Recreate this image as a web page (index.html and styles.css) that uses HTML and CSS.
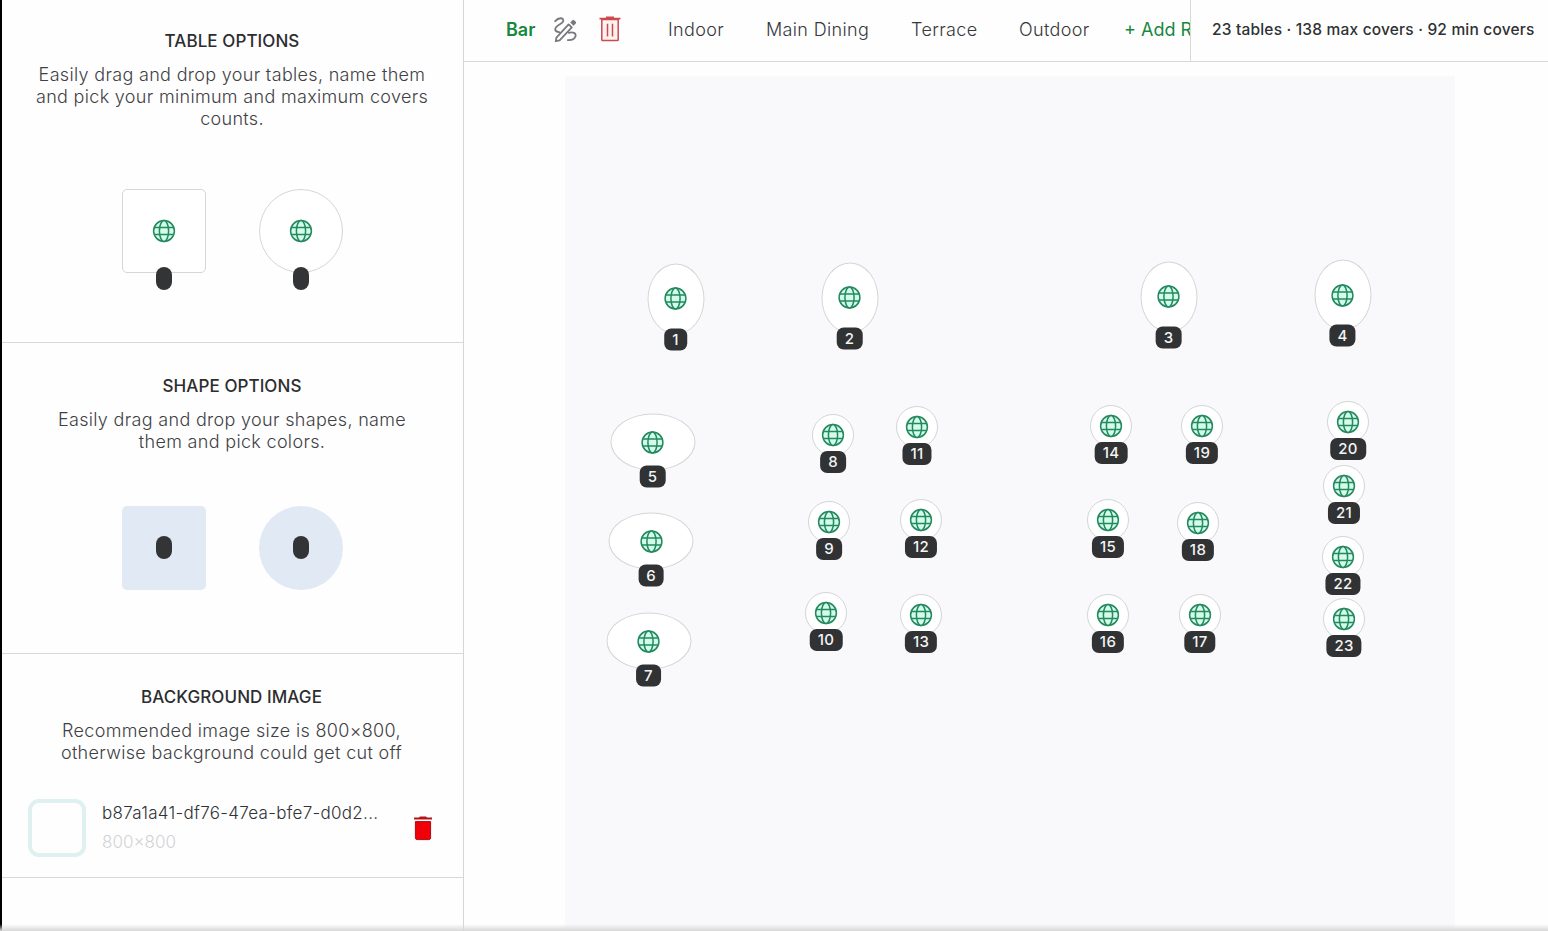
FILE: index.html
```
<!DOCTYPE html>
<html lang="en">
<head>
<meta charset="utf-8">
<title>Floor plan</title>
<link rel="stylesheet" href="styles.css">
</head>
<body>
<svg class="defs" width="0" height="0" aria-hidden="true">
  <symbol id="globe" viewBox="0 0 24 24">
    <circle cx="12" cy="12" r="10.4"/>
    <ellipse cx="12" cy="12" rx="4.6" ry="10.4"/>
    <path d="M2.3 8.5h19.4M2.3 15.5h19.4"/>
  </symbol>
</svg>
<div class="app">
  <aside class="sidebar">
    <section class="panel panel-tables">
      <h2 class="panel-title">TABLE OPTIONS</h2>
      <p class="panel-text">Easily drag and drop your tables, name them<br>and pick your minimum and maximum covers<br>counts.</p>
      <div class="palette">
        <div class="piece square"><svg class="globe"><use href="#globe"/></svg><span class="handle low"></span></div>
        <div class="piece round"><svg class="globe"><use href="#globe"/></svg><span class="handle low"></span></div>
      </div>
    </section>
    <section class="panel panel-shapes">
      <h2 class="panel-title">SHAPE OPTIONS</h2>
      <p class="panel-text">Easily drag and drop your shapes, name<br>them and pick colors.</p>
      <div class="palette">
        <div class="piece solid square"><span class="handle"></span></div>
        <div class="piece solid round"><span class="handle"></span></div>
      </div>
    </section>
    <section class="panel panel-image">
      <h2 class="panel-title">BACKGROUND IMAGE</h2>
      <p class="panel-text">Recommended image size is 800×800,<br>otherwise background could get cut off</p>
      <div class="file">
        <div class="thumb"></div>
        <div class="file-info">
          <div class="file-name">b87a1a41-df76-47ea-bfe7-d0d2...</div>
          <div class="file-size">800×800</div>
        </div>
        <svg class="file-trash" viewBox="0 0 20 26"><path d="M1 2.6h5L7 1.4h6l1 1.2h5v1.8H1z" fill="#b3121b"/><path d="M2.4 6.6h15.2v16.2q0 1.8-1.8 1.8H4.2q-1.8 0-1.8-1.8z" fill="#f00008" stroke="#a80d14"/></svg>
      </div>
    </section>
  </aside>
  <main class="main">
    <header class="topbar">
      <nav class="rooms">
        <span class="room active">Bar</span>
        <svg class="edit" viewBox="0 0 24 26"><path d="M1.2 4.2C4.8 0 10 .5 9.2 4.2 8.5 7.2 1 8.500 1.200 12.400c.1 2 1.800 2.600 4 2.800M14.800 15.800c4-1.400 7.800.4 6.600 3.800-.8 2.600-3.600 3.800-7.600 3.600M2.400 20.600 14.600 7.400l3.200 3L5.600 23.400l-3.800.8z"/><path class="tip" d="m16.200 5.400 2.200-2.200q.8-.8 1.700 0l1.700 1.600q.8.800 0 1.700l-2.300 2.200z"/></svg>
        <svg class="delete" viewBox="0 0 22 26"><path class="lid" d="M.5 2.700h21M7 1.400h8"/><path d="M2.800 3.500h16.400v20.200q0 .8-.8.800H3.600q-.8 0-.8-.8zM8.500 7.800v12.800M13.500 7.800v12.800"/></svg>
        <span class="room indoor">Indoor</span>
        <span class="room dining">Main Dining</span>
        <span class="room terrace">Terrace</span>
        <span class="room outdoor">Outdoor</span>
        <span class="room add">+ Add Room</span>
      </nav>
      <div class="summary">23 tables · 138 max covers · 92 min covers</div>
    </header>
    <div class="stage"><div class="floor" id="floor"></div></div>
  </main>
  <div class="bottom-shade"></div>
</div>
<script src="floor.js"></script>
</body>
</html>
```
FILE: styles.css
```
* { box-sizing: border-box; }
body { margin: 0; background: #fefefe; font-family: Inter, "Liberation Sans", sans-serif; color: #303235; }
.defs { position: absolute; }
.app { position: relative; display: flex; width: 1548px; height: 931px; overflow: hidden; }
.sidebar { flex: none; width: 464px; border-left: 2px solid #000; border-right: 1px solid #d6d6da; }
.panel { border-bottom: 1px solid #d8d8da; padding: 31px 28px 0 26px; text-align: center; }
.panel-tables, .panel-shapes { padding-left: 27px; }
.panel-tables { height: 343px; padding-top: 29px; }
.panel-shapes { height: 311px; }
.panel-image { height: 224px; }
.panel-title { margin: 0 0 11px; font-size: 17px; line-height: 24px; font-weight: 500; letter-spacing: .08px; color: #2c2d30; }
.panel-text { margin: 0; font-size: 18px; line-height: 21.900px; font-weight: 300; letter-spacing: .32px; white-space: nowrap; color: #3f4145; }
.palette { display: flex; justify-content: center; gap: 53px; margin-top: 59px; }
.panel-shapes .palette { margin-top: 53px; }
.piece { position: relative; width: 84px; height: 84px; display: flex; align-items: center; justify-content: center; border: 1px solid #d5d6da; background: #fff; }
.square { border-radius: 5px; }
.round { border-radius: 50%; }
.solid { background: #e1e9f4; border: 0; }
.handle { width: 16px; height: 23px; border-radius: 8px; background: #323435; }
.handle.low { position: absolute; bottom: -18px; left: 33px; }
.globe { width: 24px; height: 24px; fill: #d2fde8; stroke: #258860; stroke-width: 1.500; }
.globe ellipse, .globe path { fill: none; }
.file { display: flex; align-items: flex-start; margin-top: 35px; text-align: left; }
.thumb { flex: none; width: 58px; height: 58px; border: 4px solid #dff0f0; border-radius: 11px; }
.file-info { margin-left: 16px; width: 312px; }
.file-name { height: 29px; font-size: 17px; line-height: 28px; font-weight: 300; letter-spacing: .3px; white-space: nowrap; }
.file-size { font-size: 17px; line-height: 28px; font-weight: 300; color: #d2d3d6; }
.file-trash { flex: none; width: 20px; height: 26px; margin-top: 16px; margin-left: -1px; }
.main { flex: 1; min-width: 0; display: flex; flex-direction: column; }
.topbar { display: flex; height: 62px; border-bottom: 1px solid #d8d8dc; }
.rooms { flex: none; width: 727px; padding: 0 0 3px 42px; display: flex; align-items: center; overflow: hidden; border-right: 1px solid #d8d8dc; }
.room { flex: none; font-size: 18px; font-weight: 300; letter-spacing: .35px; white-space: nowrap; color: #36383b; }
.room.active { width: 48px; font-weight: 600; letter-spacing: 0; color: #16883f; }
.edit { flex: none; width: 24px; height: 26px; margin-top: 1px; fill: none; stroke: #77797c; stroke-width: 1.800; stroke-linecap: round; stroke-linejoin: round; }
.edit .tip { fill: #77797c; stroke: none; }
.delete { flex: none; width: 22px; height: 26px; margin-left: 21px; margin-right: 47px; fill: #fff2f1; stroke: #cb4a4d; stroke-width: 1.500; }
.delete .lid { stroke-width: 1.800; }
.indoor { width: 98px; }
.dining { width: 145px; }
.terrace { width: 108px; }
.outdoor { width: 105px; }
.room.add { font-weight: 400; color: #16883f; letter-spacing: 0; }
.summary { flex: 1; padding-left: 21px; font-size: 15.500px; line-height: 59px; font-weight: 500; letter-spacing: .19px; white-space: nowrap; color: #2f3134; }
.stage { flex: 1; padding: 14px 0 0 101px; }
.floor { position: relative; width: 890px; height: 855px; background: #f9f8fb; }
.table { position: absolute; transform: translate(-50%, -50%); display: flex; align-items: center; justify-content: center; background: #fefffe; border: 1px solid #d4d5d8; border-radius: 50%; }
.tall { width: 57px; height: 71px; }
.wide-table { width: 85px; height: 57px; }
.small { width: 42px; height: 42px; }
.badge { position: absolute; left: 50%; bottom: -18px; transform: translateX(-50%); height: 22px; padding: 0 8px; border-radius: 7px; background: #303233; color: #f4f4f5; font-size: 15px; line-height: 22px; font-weight: 500; letter-spacing: .3px; }
.tall .badge { bottom: -17px; }
.bottom-shade { position: absolute; left: 0; right: 0; bottom: 0; height: 7px; background: linear-gradient(rgba(200,200,200,0), #d8d8d8); }
```
FILE: floor.js
```
// Each entry: label, centre x, centre y (relative to the floor), shape
const tables = [
  [1, 110.5, 222.5, "tall"], [2, 284.5, 221.5, "tall"], [3, 603.5, 220.5, "tall"], [4, 777.5, 219, "tall"],
  [5, 87.5, 366, "wide-table"], [6, 86, 465, "wide-table"], [7, 83.5, 565, "wide-table"],
  [8, 268, 359, "small"], [9, 264, 446, "small"], [10, 261, 537, "small"],
  [11, 352, 351, "small"], [12, 356, 444, "small"], [13, 356, 539, "small"],
  [14, 546, 350, "small"], [15, 543, 444, "small"], [16, 543, 539, "small"],
  [17, 635, 539, "small"], [18, 633, 447, "small"], [19, 637, 350, "small"],
  [20, 783, 346, "small"], [21, 779, 410, "small"], [22, 778, 481, "small"], [23, 779, 543, "small"]
];
document.getElementById("floor").innerHTML = tables.map(([n, x, y, shape]) =>
  `<div class="table ${shape}" style="left:${x}px;top:${y}px"><svg class="globe"><use href="#globe"/></svg><span class="badge">${n}</span></div>`
).join("");
```
